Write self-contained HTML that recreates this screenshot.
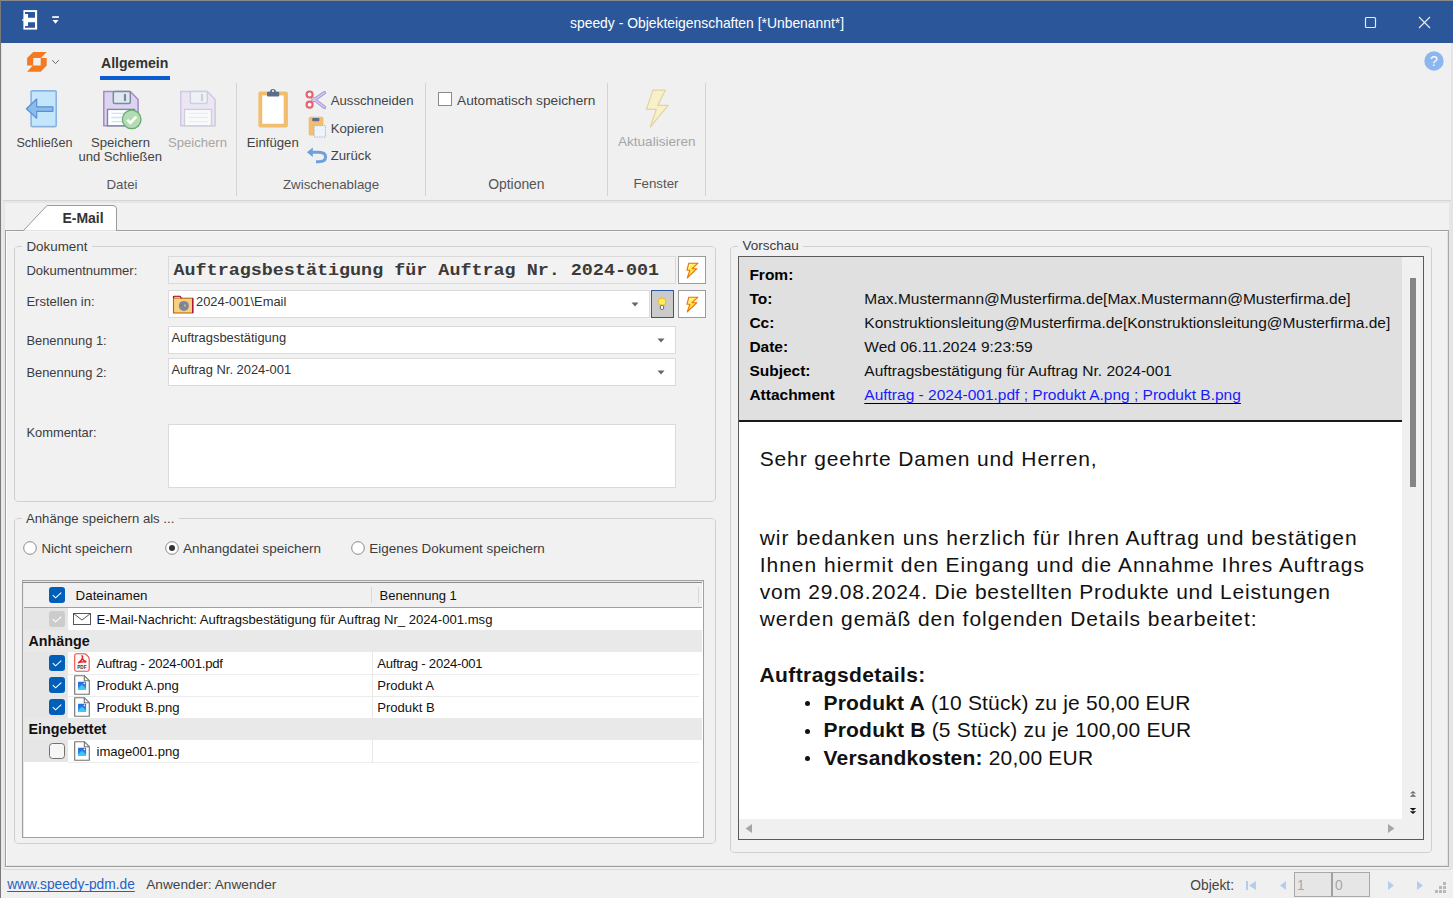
<!DOCTYPE html><html><head><meta charset="utf-8"><style>
html,body{margin:0;padding:0;}
body{width:1453px;height:898px;overflow:hidden;position:relative;background:#f0f0f0;font-family:"Liberation Sans",sans-serif;}
.t{position:absolute;white-space:pre;}
.r{position:absolute;box-sizing:border-box;}
</style></head><body>
<div class="r" style="left:0px;top:0px;width:1453px;height:1px;background:#8a8a8a"></div>
<div class="r" style="left:0px;top:0px;width:1px;height:898px;background:#7a7a7a"></div>
<div class="r" style="left:1px;top:1px;width:1452px;height:42px;background:#2b579a"></div>
<svg class="r" style="left:21px;top:9px;" width="18" height="23" viewBox="0 0 18 23"><rect x="2.4" y="1.1" width="13.7" height="19.5" fill="#fff"/><path d="M4 3.1 H14 V8.7 H7 V5 H4 Z M4 18.8 H14 V13.2 H7 V17 H4 Z" fill="#2b579a"/><path d="M2.6 9.6 L0.8 11 L2.6 12.4 Z" fill="#fff"/></svg>
<svg class="r" style="left:49px;top:15px;" width="12" height="10" viewBox="0 0 12 10"><rect x="3.2" y="1.2" width="6.7" height="1.7" fill="#fff"/><path d="M3.5 5 L9.5 5 L6.5 8.8 Z" fill="#fff"/></svg>
<div class="t" style="left:570px;top:14.18px;font-size:13.9px;line-height:18px;font-weight:400;color:#fff;font-family:'Liberation Sans', sans-serif;letter-spacing:0px;">speedy - Objekteigenschaften [*Unbenannt*]</div>
<svg class="r" style="left:1364px;top:16px;" width="13" height="13" viewBox="0 0 13 13"><rect x="1.5" y="1.5" width="10" height="10" rx="1" fill="none" stroke="#e8e8e8" stroke-width="1.2"/></svg>
<svg class="r" style="left:1418px;top:16px;" width="13" height="13" viewBox="0 0 13 13"><path d="M1 1 L12 12 M12 1 L1 12" stroke="#e8e8e8" stroke-width="1.2"/></svg>
<div class="r" style="left:1px;top:43px;width:1452px;height:157px;background:#f0f0f0"></div>
<div class="r" style="left:1px;top:43px;width:1px;height:826px;background:#e6e6e6"></div>
<div class="r" style="left:2px;top:43px;width:1px;height:826px;background:#ececec"></div>
<div class="r" style="left:1451px;top:43px;width:2px;height:826px;background:#e4e4e4"></div>
<div class="r" style="left:3px;top:200px;width:1448px;height:1px;background:#d6d6d6"></div>
<div class="r" style="left:3px;top:201px;width:1448px;height:1px;background:#e6e6e6"></div>
<svg class="r" style="left:26px;top:51px;" width="22" height="22" viewBox="0 0 22 22"><path d="M7.2 1 L20.7 1 L15 7.1 L20.7 7.1 L20.7 14.6 L14.7 20.8 L1.1 20.8 L6.8 14.6 L1.1 14.6 L1.1 7.1 Z M7.2 7.1 L7.2 14.6 L14.7 14.6 L14.7 7.1 Z" fill="#f57a1f" fill-rule="evenodd"/></svg>
<svg class="r" style="left:50px;top:58px;" width="10" height="7" viewBox="0 0 10 7"><path d="M2.2 2.2 L5.5 5.6 L8.8 2.2" fill="none" stroke="#666" stroke-width="1"/></svg>
<div class="t" style="left:101px;top:54.11px;font-size:14.1px;line-height:18px;font-weight:700;color:#333;font-family:'Liberation Sans', sans-serif;letter-spacing:0px;">Allgemein</div>
<div class="r" style="left:100px;top:76px;width:70px;height:4px;background:#0b5ccf"></div>
<svg class="r" style="left:1424px;top:51px;" width="20" height="20" viewBox="0 0 20 20"><circle cx="10" cy="10" r="9.7" fill="#8cb6ef"/><text x="10" y="15" font-family="Liberation Sans" font-weight="400" font-size="14" fill="#fff" text-anchor="middle">?</text></svg>
<div class="r" style="left:236px;top:83px;width:1px;height:113px;background:#d4d4d4"></div>
<div class="r" style="left:425px;top:83px;width:1px;height:113px;background:#d4d4d4"></div>
<div class="r" style="left:607px;top:83px;width:1px;height:113px;background:#d4d4d4"></div>
<div class="r" style="left:705px;top:83px;width:1px;height:113px;background:#d4d4d4"></div>
<svg class="r" style="left:24px;top:88px;" width="36" height="42" viewBox="0 0 36 42"><rect x="7.1" y="2.9" width="25.1" height="35.7" rx="1" fill="#c4e6fc" stroke="#8ab4de" stroke-width="1.6"/><path d="M2.4 20.8 L12.7 11 L12.7 18.8 L28.9 18.8 L28.9 23.3 L12.7 23.3 L12.7 30.2 Z" fill="#8cbcee" stroke="#5a90d0" stroke-width="1.2" stroke-linejoin="round"/></svg>
<div class="t" style="left:16.4px;top:134.63px;font-size:12.6px;line-height:16px;font-weight:400;color:#444;font-family:'Liberation Sans', sans-serif;letter-spacing:0px;">Schließen</div>
<svg class="r" style="left:100px;top:88px;" width="44" height="44" viewBox="0 0 44 44"><path d="M3.8 3.6 L30.3 3.6 L38.1 11.6 L38.1 37.8 L3.8 37.8 Z" fill="#dcd4f0" stroke="#a48cc4" stroke-width="1.5"/><rect x="13.3" y="3.6" width="17" height="11.9" rx="1.5" fill="#dde8f0" stroke="#7c8aa0" stroke-width="1.5"/><rect x="23.9" y="6" width="2.2" height="7" fill="#7c8aa0"/><rect x="7.5" y="21.4" width="27" height="16.4" fill="#fff" stroke="#7c8aa0" stroke-width="1.4"/><path d="M11.4 25.3 H31 M11.4 29.5 H31 M11.4 33.6 H31" stroke="#c8e4f8" stroke-width="1.3"/><circle cx="31.7" cy="31.4" r="9.3" fill="#b4dcb4" stroke="#6aaa70" stroke-width="1.3"/><path d="M27.3 31.8 L30.3 34.8 L36.4 28.6" fill="none" stroke="#fff" stroke-width="2.6"/></svg>
<div class="t" style="left:91px;top:133.96px;font-size:13.1px;line-height:17px;font-weight:400;color:#444;font-family:'Liberation Sans', sans-serif;letter-spacing:0px;">Speichern</div>
<div class="t" style="left:78.4px;top:147.96px;font-size:13.1px;line-height:17px;font-weight:400;color:#444;font-family:'Liberation Sans', sans-serif;letter-spacing:0px;">und Schließen</div>
<svg class="r" style="left:177px;top:88px;" width="44" height="44" viewBox="0 0 44 44"><path d="M3.8 3.6 L30.3 3.6 L38.1 11.6 L38.1 37.8 L3.8 37.8 Z" fill="#ece6f4" stroke="#d2c6e2" stroke-width="1.5"/><rect x="13.3" y="3.6" width="17" height="11.9" rx="1.5" fill="#eef2f6" stroke="#cbd0da" stroke-width="1.5"/><rect x="23.9" y="6" width="2.2" height="7" fill="#cbd0da"/><rect x="7.5" y="21.4" width="27" height="16.4" fill="#fafafa" stroke="#cbd0da" stroke-width="1.4"/><path d="M11.4 25.3 H31 M11.4 29.5 H31 M11.4 33.6 H31" stroke="#e2eef8" stroke-width="1.3"/></svg>
<div class="t" style="left:168px;top:133.96px;font-size:13.1px;line-height:17px;font-weight:400;color:#a6a6a6;font-family:'Liberation Sans', sans-serif;letter-spacing:0px;">Speichern</div>
<div class="t" style="left:106.5px;top:175.69px;font-size:13.3px;line-height:17px;font-weight:400;color:#555;font-family:'Liberation Sans', sans-serif;letter-spacing:0px;">Datei</div>
<svg class="r" style="left:256px;top:86px;" width="34" height="44" viewBox="0 0 34 44"><rect x="2.4" y="5.5" width="29.5" height="35.9" rx="2" fill="#f2bd6c"/><rect x="6.2" y="9.4" width="21.5" height="28.4" fill="#fff"/><rect x="11" y="5.8" width="12.2" height="4.7" rx="1" fill="#5a6e8c"/><path d="M14 6 Q14 3 17 3 Q20 3 20 6 Z" fill="#5a6e8c"/><circle cx="17" cy="5" r="1" fill="#fff"/></svg>
<div class="t" style="left:246.7px;top:133.73px;font-size:13.2px;line-height:17px;font-weight:400;color:#444;font-family:'Liberation Sans', sans-serif;letter-spacing:0px;">Einfügen</div>
<svg class="r" style="left:304px;top:89px;" width="24" height="22" viewBox="0 0 24 22"><path d="M8.5 12 L20.5 3.7 M8.5 9 L20.5 18.4" stroke="#a594d4" stroke-width="3.4" stroke-linecap="round"/><path d="M8.5 12 L20.5 3.7 M8.5 9 L20.5 18.4" stroke="#d4c6f0" stroke-width="1.6" stroke-linecap="round"/><circle cx="5.6" cy="5.5" r="3" fill="#fff" stroke="#e06670" stroke-width="2.2"/><circle cx="5.6" cy="15.7" r="3" fill="#fff" stroke="#e06670" stroke-width="2.2"/></svg>
<div class="t" style="left:330.7px;top:91.73px;font-size:13.2px;line-height:17px;font-weight:400;color:#444;font-family:'Liberation Sans', sans-serif;letter-spacing:0px;">Ausschneiden</div>
<svg class="r" style="left:306px;top:115px;" width="22" height="24" viewBox="0 0 22 24"><rect x="2.7" y="1.7" width="14.7" height="18.7" rx="1.5" fill="#f2bd6c"/><rect x="6.2" y="3" width="7.2" height="3.2" rx="1" fill="#5a6e8c"/><rect x="8.1" y="10.7" width="11.3" height="11.3" fill="#eef4fa" stroke="#a8b4c4" stroke-width="1" stroke-dasharray="1.5 1"/></svg>
<div class="t" style="left:330.7px;top:119.63px;font-size:13.2px;line-height:17px;font-weight:400;color:#444;font-family:'Liberation Sans', sans-serif;letter-spacing:0px;">Kopieren</div>
<svg class="r" style="left:305px;top:145px;" width="24" height="20" viewBox="0 0 24 20"><path d="M6 7.3 H13.5 Q20.6 7.3 20.6 12 Q20.6 16.7 13.5 16.7 H11" fill="none" stroke="#6ea0dc" stroke-width="3"/><path d="M1.9 7.3 L7.8 2.5 L7.8 12.1 Z" fill="#6ea0dc"/></svg>
<div class="t" style="left:330.7px;top:147.43px;font-size:13.2px;line-height:17px;font-weight:400;color:#444;font-family:'Liberation Sans', sans-serif;letter-spacing:0px;">Zurück</div>
<div class="t" style="left:283px;top:175.59px;font-size:13.3px;line-height:17px;font-weight:400;color:#555;font-family:'Liberation Sans', sans-serif;letter-spacing:0px;">Zwischenablage</div>
<div class="r" style="left:438px;top:92px;width:14px;height:14px;background:#fff;border:1px solid #8a8a8a"></div>
<div class="t" style="left:457px;top:91.55px;font-size:13.7px;line-height:18px;font-weight:400;color:#444;font-family:'Liberation Sans', sans-serif;letter-spacing:0px;">Automatisch speichern</div>
<div class="t" style="left:488.2px;top:174.58px;font-size:13.9px;line-height:18px;font-weight:400;color:#555;font-family:'Liberation Sans', sans-serif;letter-spacing:0px;">Optionen</div>
<svg class="r" style="left:643px;top:88px;" width="30" height="42" viewBox="0 0 30 42"><path d="M10 2.1 L22.4 2.1 L14.7 17.4 L25.1 17.4 L7.4 38.8 L13.3 21.4 L3.4 21.4 Z" fill="#f8f0c8" stroke="#e2d2a0" stroke-width="1.2" stroke-linejoin="round"/></svg>
<div class="t" style="left:618px;top:133.30px;font-size:13.55px;line-height:18px;font-weight:400;color:#a6a6a6;font-family:'Liberation Sans', sans-serif;letter-spacing:0px;">Aktualisieren</div>
<div class="t" style="left:633.4px;top:175.29px;font-size:13.3px;line-height:17px;font-weight:400;color:#555;font-family:'Liberation Sans', sans-serif;letter-spacing:0px;">Fenster</div>
<div class="r" style="left:3px;top:201px;width:1448px;height:2px;background:#e6e6e6"></div>
<div class="r" style="left:3px;top:203px;width:2px;height:666px;background:#e6e6e6"></div>
<div class="r" style="left:1449px;top:203px;width:2px;height:666px;background:#e6e6e6"></div>
<div class="r" style="left:5px;top:203px;width:1444px;height:666px;background:#f1f1f1"></div>
<div class="r" style="left:5px;top:230px;width:1444px;height:637px;border:1px solid #a0a0a0;border-right-color:#a8a8a8;"></div>
<div class="r" style="left:6px;top:231px;width:1442px;height:635px;border-left:1px solid #fbfbfb;border-top:1px solid #f8f8f8;border-right:1px solid #e3e3e3;border-bottom:1px solid #e3e3e3;"></div>
<div class="r" style="left:3px;top:869px;width:1448px;height:1px;background:#dcdcdc"></div>
<svg class="r" style="left:22px;top:204px;" width="96" height="28" viewBox="0 0 96 28"><path d="M1 27 L25 1.5 L91 1.5 Q94.5 1.5 94.5 5 L94.5 27" fill="#fff" stroke="#9a9a9a" stroke-width="1"/><rect x="2" y="26" width="92" height="1.2" fill="#e2e2e2"/><rect x="2" y="27" width="92" height="1" fill="#f6f6f6"/></svg>
<div class="t" style="left:62.4px;top:208.65px;font-size:14px;line-height:18px;font-weight:700;color:#333;font-family:'Liberation Sans', sans-serif;letter-spacing:0px;">E-Mail</div>
<svg class="r" style="left:14px;top:246px" width="703" height="257" viewBox="0 0 703 257"><path d="M8 0.5 L3.0 0.5 L0.5 3.0 L0.5 253.0 L3.0 255.5 L699.0 255.5 L701.5 253.0 L701.5 3.0 L699.0 0.5 L78 0.5" fill="none" stroke="#d0d0d0" stroke-width="1"/></svg>
<div class="t" style="left:26.4px;top:237.56px;font-size:13.4px;line-height:17px;font-weight:400;color:#3c3c3c;font-family:'Liberation Sans', sans-serif;letter-spacing:0px;">Dokument</div>
<div class="t" style="left:26.4px;top:261.58px;font-size:13.05px;line-height:17px;font-weight:400;color:#3c3c3c;font-family:'Liberation Sans', sans-serif;letter-spacing:0px;">Dokumentnummer:</div>
<div class="t" style="left:26.4px;top:293.48px;font-size:13.05px;line-height:17px;font-weight:400;color:#3c3c3c;font-family:'Liberation Sans', sans-serif;letter-spacing:0px;">Erstellen in:</div>
<div class="t" style="left:26.4px;top:332.03px;font-size:12.9px;line-height:17px;font-weight:400;color:#3c3c3c;font-family:'Liberation Sans', sans-serif;letter-spacing:0px;">Benennung 1:</div>
<div class="t" style="left:26.4px;top:364.03px;font-size:12.9px;line-height:17px;font-weight:400;color:#3c3c3c;font-family:'Liberation Sans', sans-serif;letter-spacing:0px;">Benennung 2:</div>
<div class="t" style="left:26.4px;top:423.73px;font-size:12.9px;line-height:17px;font-weight:400;color:#3c3c3c;font-family:'Liberation Sans', sans-serif;letter-spacing:0px;">Kommentar:</div>
<div class="r" style="left:168px;top:256px;width:508px;height:28px;background:#f2f2f2;border:1px solid #dadada"></div>
<div class="t" style="left:173.5px;top:258.62px;font-size:18.4px;line-height:24px;font-weight:700;color:#3a3a3a;font-family:'Liberation Mono', monospace;letter-spacing:0px;transform:scaleY(0.87);transform-origin:0 17.2px;">Auftragsbestätigung für Auftrag Nr. 2024-001</div>
<div class="r" style="left:678px;top:256px;width:28px;height:28px;background:#fff;border:1px solid #9c9c9c"></div>
<svg class="r" style="left:684px;top:260px;" width="20" height="22" viewBox="0 0 20 22"><defs><linearGradient id="bg" x1="0" y1="0" x2="1" y2="1"><stop offset="0" stop-color="#fffbd0"/><stop offset="0.5" stop-color="#ffe838"/><stop offset="1" stop-color="#ffc800"/></linearGradient></defs><path d="M4.8 3.2 L14 3.2 L8.1 8.7 L12.9 8.7 L3.3 17.9 L5.9 10.2 L3 10.2 Z" fill="url(#bg)" stroke="#e87400" stroke-width="1.15" stroke-linejoin="round"/></svg>
<div class="r" style="left:678px;top:290px;width:28px;height:28px;background:#fff;border:1px solid #9c9c9c"></div>
<svg class="r" style="left:684px;top:294px;" width="20" height="22" viewBox="0 0 20 22"><defs><linearGradient id="bg" x1="0" y1="0" x2="1" y2="1"><stop offset="0" stop-color="#fffbd0"/><stop offset="0.5" stop-color="#ffe838"/><stop offset="1" stop-color="#ffc800"/></linearGradient></defs><path d="M4.8 3.2 L14 3.2 L8.1 8.7 L12.9 8.7 L3.3 17.9 L5.9 10.2 L3 10.2 Z" fill="url(#bg)" stroke="#e87400" stroke-width="1.15" stroke-linejoin="round"/></svg>
<div class="r" style="left:651px;top:290px;width:23px;height:28px;background:#cbcbcb;border:1.3px solid #2a58a8"></div>
<svg class="r" style="left:655px;top:296px;" width="16" height="16" viewBox="0 0 16 16"><circle cx="7" cy="5.8" r="3.8" fill="#ffef60" stroke="#f0b020" stroke-width="0.9"/><rect x="5.4" y="9.3" width="3.2" height="4.2" rx="1.2" fill="#f4f4f4" stroke="#555" stroke-width="0.9"/></svg>
<div class="r" style="left:168px;top:290px;width:482px;height:28px;background:#fff;border:1px solid #dadada"></div>
<svg class="r" style="left:172px;top:295px;" width="22" height="20" viewBox="0 0 22 20"><rect x="1.5" y="3.2" width="19.3" height="14.8" fill="#f8d080" stroke="#b86a10" stroke-width="1.1"/><path d="M20.8 3.2 V18" stroke="#a00040" stroke-width="1.2"/><path d="M1.5 3.2 V1.8 Q1.5 1.2 2.2 1.2 L8 1.2 L9 2.4 L9 3.4" fill="#f0c070" stroke="#a00020" stroke-width="1.1"/><circle cx="11.9" cy="10.9" r="5" fill="#85859a"/><circle cx="9.5" cy="10" r="1" fill="#20a0a0"/><circle cx="13" cy="10.5" r="0.9" fill="#e0d060"/></svg>
<div class="t" style="left:196px;top:293.23px;font-size:12.9px;line-height:17px;font-weight:400;color:#333;font-family:'Liberation Sans', sans-serif;letter-spacing:0px;">2024-001\Email</div>
<svg class="r" style="left:631px;top:302px;" width="8" height="5" viewBox="0 0 8 5"><path d="M0.5 0.5 L7.5 0.5 L4 4.5 Z" fill="#666"/></svg>
<div class="r" style="left:168px;top:326px;width:508px;height:28px;background:#fff;border:1px solid #dadada"></div>
<div class="t" style="left:171.4px;top:328.63px;font-size:12.9px;line-height:17px;font-weight:400;color:#333;font-family:'Liberation Sans', sans-serif;letter-spacing:0px;">Auftragsbestätigung</div>
<svg class="r" style="left:657px;top:338px;" width="8" height="5" viewBox="0 0 8 5"><path d="M0.5 0.5 L7.5 0.5 L4 4.5 Z" fill="#666"/></svg>
<div class="r" style="left:168px;top:358px;width:508px;height:28px;background:#fff;border:1px solid #dadada"></div>
<div class="t" style="left:171.4px;top:360.63px;font-size:12.9px;line-height:17px;font-weight:400;color:#333;font-family:'Liberation Sans', sans-serif;letter-spacing:0px;">Auftrag Nr. 2024-001</div>
<svg class="r" style="left:657px;top:370px;" width="8" height="5" viewBox="0 0 8 5"><path d="M0.5 0.5 L7.5 0.5 L4 4.5 Z" fill="#666"/></svg>
<div class="r" style="left:168px;top:424px;width:508px;height:64px;background:#fff;border:1px solid #dadada"></div>
<svg class="r" style="left:14px;top:518px" width="703" height="327" viewBox="0 0 703 327"><path d="M8 0.5 L3.0 0.5 L0.5 3.0 L0.5 323.0 L3.0 325.5 L699.0 325.5 L701.5 323.0 L701.5 3.0 L699.0 0.5 L165 0.5" fill="none" stroke="#d0d0d0" stroke-width="1"/></svg>
<div class="t" style="left:26px;top:510.24px;font-size:13.15px;line-height:17px;font-weight:400;color:#3c3c3c;font-family:'Liberation Sans', sans-serif;letter-spacing:0px;">Anhänge speichern als ...</div>
<svg class="r" style="left:23px;top:541px;" width="14" height="14" viewBox="0 0 14 14"><circle cx="7" cy="7" r="6.3" fill="#fff" stroke="#8a8a8a" stroke-width="1"/></svg>
<div class="t" style="left:41.4px;top:539.63px;font-size:13.2px;line-height:17px;font-weight:400;color:#3c3c3c;font-family:'Liberation Sans', sans-serif;letter-spacing:0px;">Nicht speichern</div>
<svg class="r" style="left:165px;top:541px;" width="14" height="14" viewBox="0 0 14 14"><circle cx="7" cy="7" r="6.3" fill="#fff" stroke="#8a8a8a" stroke-width="1"/><circle cx="7" cy="7" r="3" fill="#333"/></svg>
<div class="t" style="left:183px;top:539.52px;font-size:13.5px;line-height:18px;font-weight:400;color:#3c3c3c;font-family:'Liberation Sans', sans-serif;letter-spacing:0px;">Anhangdatei speichern</div>
<svg class="r" style="left:351px;top:541px;" width="14" height="14" viewBox="0 0 14 14"><circle cx="7" cy="7" r="6.3" fill="#fff" stroke="#8a8a8a" stroke-width="1"/></svg>
<div class="t" style="left:369.3px;top:539.84px;font-size:13.45px;line-height:17px;font-weight:400;color:#3c3c3c;font-family:'Liberation Sans', sans-serif;letter-spacing:0px;">Eigenes Dokument speichern</div>
<div class="r" style="left:22px;top:580px;width:682px;height:258px;background:#fff;border:1px solid #a0a0a0"></div>
<div class="r" style="left:23px;top:581px;width:680px;height:256px;border-top:1px solid #e8e8e8;border-left:1px solid #e8e8e8;"></div>
<div class="r" style="left:23px;top:582px;width:679px;height:1px;background:#8c8c8c"></div>
<div class="r" style="left:24px;top:583px;width:678px;height:24px;background:#f0f0f0"></div>
<div class="r" style="left:24px;top:607px;width:678px;height:1px;background:#a0a0a0"></div>
<div class="r" style="left:371px;top:587px;width:1px;height:16px;background:#d8d8d8"></div>
<div class="r" style="left:698px;top:587px;width:1px;height:16px;background:#d8d8d8"></div>
<svg class="r" style="left:49px;top:587px;" width="16" height="16" viewBox="0 0 16 16"><rect x="0" y="0" width="16" height="16" rx="3" fill="#005fb8"/><path d="M3.8 8.2 L6.6 10.8 L12.3 5.6" fill="none" stroke="#fff" stroke-width="1.1"/></svg>
<div class="t" style="left:75.6px;top:586.87px;font-size:13.35px;line-height:17px;font-weight:400;color:#111;font-family:'Liberation Sans', sans-serif;letter-spacing:0px;">Dateinamen</div>
<div class="t" style="left:379.5px;top:586.80px;font-size:13.0px;line-height:17px;font-weight:400;color:#111;font-family:'Liberation Sans', sans-serif;letter-spacing:0px;">Benennung 1</div>
<div class="r" style="left:24px;top:608px;width:44px;height:22px;background:#e6e6e6"></div>
<div class="r" style="left:68px;top:630px;width:631px;height:1px;background:#ececec"></div>
<svg class="r" style="left:49px;top:611px;" width="16" height="16" viewBox="0 0 16 16"><rect x="0" y="0" width="16" height="16" rx="3" fill="#cccccc"/><path d="M3.8 8.2 L6.6 10.8 L12.3 5.6" fill="none" stroke="#fff" stroke-width="1.1"/></svg>
<svg class="r" style="left:73px;top:613px;" width="18" height="12" viewBox="0 0 18 12"><rect x="0.5" y="0.5" width="17" height="11" fill="#fff" stroke="#555" stroke-width="1"/><path d="M0.5 0.5 L9 7 L17.5 0.5" fill="none" stroke="#555" stroke-width="1"/></svg>
<div class="t" style="left:96.5px;top:611.46px;font-size:13.1px;line-height:17px;font-weight:400;color:#111;font-family:'Liberation Sans', sans-serif;letter-spacing:0px;">E-Mail-Nachricht: Auftragsbestätigung für Auftrag Nr_ 2024-001.msg</div>
<div class="r" style="left:24px;top:630px;width:678px;height:22px;background:#e9e9e9"></div>
<div class="t" style="left:28.5px;top:632.05px;font-size:14.3px;line-height:19px;font-weight:700;color:#111;font-family:'Liberation Sans', sans-serif;letter-spacing:0px;">Anhänge</div>
<div class="r" style="left:24px;top:652px;width:44px;height:22px;background:#e6e6e6"></div>
<div class="r" style="left:68px;top:674px;width:631px;height:1px;background:#ececec"></div>
<div class="r" style="left:372px;top:652px;width:1px;height:22px;background:#e8e8e8"></div>
<svg class="r" style="left:49px;top:655px;" width="16" height="16" viewBox="0 0 16 16"><rect x="0" y="0" width="16" height="16" rx="3" fill="#005fb8"/><path d="M3.8 8.2 L6.6 10.8 L12.3 5.6" fill="none" stroke="#fff" stroke-width="1.1"/></svg>
<svg class="r" style="left:74px;top:653px;" width="16" height="20" viewBox="0 0 16 20"><path d="M0.7 2.6 Q0.7 0.7 2.6 0.7 L11 0.7 Q15.2 3.5 15.2 6 L15.2 16.4 Q15.2 18.3 13.3 18.3 L2.6 18.3 Q0.7 18.3 0.7 16.4 Z" fill="#fafafa" stroke="#f04848" stroke-width="1.1"/><path d="M7.4 2.8 Q9 2.8 8.4 5.2 Q7.6 7.6 4.2 10.2 M8.3 5.6 Q9.6 8 12.4 8.7 M4.4 9.6 Q8 8.3 12.2 8.9" stroke="#e82020" stroke-width="1.5" fill="none"/><text x="7.9" y="15.6" font-size="4.6" font-family="Liberation Sans" font-weight="700" text-anchor="middle" fill="#333">PDF</text></svg>
<div class="t" style="left:96.5px;top:655.46px;font-size:13.1px;line-height:17px;font-weight:400;color:#111;font-family:'Liberation Sans', sans-serif;letter-spacing:-0.22px;">Auftrag - 2024-001.pdf</div>
<div class="t" style="left:377.2px;top:655.46px;font-size:13.1px;line-height:17px;font-weight:400;color:#111;font-family:'Liberation Sans', sans-serif;letter-spacing:-0.22px;">Auftrag - 2024-001</div>
<div class="r" style="left:24px;top:674px;width:44px;height:22px;background:#e6e6e6"></div>
<div class="r" style="left:68px;top:696px;width:631px;height:1px;background:#ececec"></div>
<div class="r" style="left:372px;top:674px;width:1px;height:22px;background:#e8e8e8"></div>
<svg class="r" style="left:49px;top:677px;" width="16" height="16" viewBox="0 0 16 16"><rect x="0" y="0" width="16" height="16" rx="3" fill="#005fb8"/><path d="M3.8 8.2 L6.6 10.8 L12.3 5.6" fill="none" stroke="#fff" stroke-width="1.1"/></svg>
<svg class="r" style="left:74px;top:675px;" width="16" height="20" viewBox="0 0 16 20"><defs><linearGradient id="pg" x1="0" y1="0" x2="0" y2="1"><stop offset="0" stop-color="#2a66d6"/><stop offset="1" stop-color="#2a9af0"/></linearGradient></defs><path d="M0.7 0.7 L10.3 0.7 L15.3 5.7 L15.3 19.3 L0.7 19.3 Z" fill="#fff" stroke="#707070" stroke-width="1.1" stroke-linejoin="round"/><path d="M10.3 0.7 V5.7 H15.3" fill="none" stroke="#707070" stroke-width="1.1"/><rect x="4" y="6.8" width="8.1" height="8.3" rx="0.8" fill="url(#pg)"/><path d="M4 15.1 L4 13.6 L8 9.8 L12.1 13.8 L12.1 15.1 Z" fill="#3cc8ff"/><circle cx="10.4" cy="8.4" r="0.8" fill="#fff"/></svg>
<div class="t" style="left:96.5px;top:677.46px;font-size:13.1px;line-height:17px;font-weight:400;color:#111;font-family:'Liberation Sans', sans-serif;letter-spacing:0px;">Produkt A.png</div>
<div class="t" style="left:377.2px;top:677.46px;font-size:13.1px;line-height:17px;font-weight:400;color:#111;font-family:'Liberation Sans', sans-serif;letter-spacing:0px;">Produkt A</div>
<div class="r" style="left:24px;top:696px;width:44px;height:22px;background:#e6e6e6"></div>
<div class="r" style="left:68px;top:718px;width:631px;height:1px;background:#ececec"></div>
<div class="r" style="left:372px;top:696px;width:1px;height:22px;background:#e8e8e8"></div>
<svg class="r" style="left:49px;top:699px;" width="16" height="16" viewBox="0 0 16 16"><rect x="0" y="0" width="16" height="16" rx="3" fill="#005fb8"/><path d="M3.8 8.2 L6.6 10.8 L12.3 5.6" fill="none" stroke="#fff" stroke-width="1.1"/></svg>
<svg class="r" style="left:74px;top:697px;" width="16" height="20" viewBox="0 0 16 20"><defs><linearGradient id="pg" x1="0" y1="0" x2="0" y2="1"><stop offset="0" stop-color="#2a66d6"/><stop offset="1" stop-color="#2a9af0"/></linearGradient></defs><path d="M0.7 0.7 L10.3 0.7 L15.3 5.7 L15.3 19.3 L0.7 19.3 Z" fill="#fff" stroke="#707070" stroke-width="1.1" stroke-linejoin="round"/><path d="M10.3 0.7 V5.7 H15.3" fill="none" stroke="#707070" stroke-width="1.1"/><rect x="4" y="6.8" width="8.1" height="8.3" rx="0.8" fill="url(#pg)"/><path d="M4 15.1 L4 13.6 L8 9.8 L12.1 13.8 L12.1 15.1 Z" fill="#3cc8ff"/><circle cx="10.4" cy="8.4" r="0.8" fill="#fff"/></svg>
<div class="t" style="left:96.5px;top:699.46px;font-size:13.1px;line-height:17px;font-weight:400;color:#111;font-family:'Liberation Sans', sans-serif;letter-spacing:0px;">Produkt B.png</div>
<div class="t" style="left:377.2px;top:699.46px;font-size:13.1px;line-height:17px;font-weight:400;color:#111;font-family:'Liberation Sans', sans-serif;letter-spacing:0px;">Produkt B</div>
<div class="r" style="left:24px;top:718px;width:678px;height:22px;background:#e9e9e9"></div>
<div class="t" style="left:28.5px;top:720.05px;font-size:14.3px;line-height:19px;font-weight:700;color:#111;font-family:'Liberation Sans', sans-serif;letter-spacing:0px;">Eingebettet</div>
<div class="r" style="left:24px;top:740px;width:44px;height:22px;background:#e6e6e6"></div>
<div class="r" style="left:68px;top:762px;width:631px;height:1px;background:#ececec"></div>
<div class="r" style="left:372px;top:740px;width:1px;height:22px;background:#e8e8e8"></div>
<svg class="r" style="left:49px;top:743px;" width="16" height="16" viewBox="0 0 16 16"><rect x="0.5" y="0.5" width="15" height="15" rx="3" fill="#f6f6f6" stroke="#707070" stroke-width="1"/></svg>
<svg class="r" style="left:74px;top:741px;" width="16" height="20" viewBox="0 0 16 20"><defs><linearGradient id="pg" x1="0" y1="0" x2="0" y2="1"><stop offset="0" stop-color="#2a66d6"/><stop offset="1" stop-color="#2a9af0"/></linearGradient></defs><path d="M0.7 0.7 L10.3 0.7 L15.3 5.7 L15.3 19.3 L0.7 19.3 Z" fill="#fff" stroke="#707070" stroke-width="1.1" stroke-linejoin="round"/><path d="M10.3 0.7 V5.7 H15.3" fill="none" stroke="#707070" stroke-width="1.1"/><rect x="4" y="6.8" width="8.1" height="8.3" rx="0.8" fill="url(#pg)"/><path d="M4 15.1 L4 13.6 L8 9.8 L12.1 13.8 L12.1 15.1 Z" fill="#3cc8ff"/><circle cx="10.4" cy="8.4" r="0.8" fill="#fff"/></svg>
<div class="t" style="left:96.5px;top:743.46px;font-size:13.1px;line-height:17px;font-weight:400;color:#111;font-family:'Liberation Sans', sans-serif;letter-spacing:0px;">image001.png</div>
<svg class="r" style="left:730px;top:246px" width="703" height="608" viewBox="0 0 703 608"><path d="M8 0.5 L3.0 0.5 L0.5 3.0 L0.5 604.0 L3.0 606.5 L699.0 606.5 L701.5 604.0 L701.5 3.0 L699.0 0.5 L73 0.5" fill="none" stroke="#d0d0d0" stroke-width="1"/></svg>
<div class="t" style="left:742.4px;top:236.72px;font-size:13.5px;line-height:18px;font-weight:400;color:#3c3c3c;font-family:'Liberation Sans', sans-serif;letter-spacing:0px;">Vorschau</div>
<div class="r" style="left:738px;top:256px;width:686px;height:584px;background:#fff;border:1px solid #5a5a5a"></div>
<div class="r" style="left:739px;top:257px;width:663px;height:163px;background:#e0e0e0"></div>
<div class="r" style="left:739px;top:420px;width:663px;height:2px;background:#1a1a1a"></div>
<div class="r" style="left:1402px;top:257px;width:21px;height:562px;background:#f0f0f0"></div>
<div class="r" style="left:1410px;top:278px;width:6px;height:209px;background:#858585"></div>
<svg class="r" style="left:1409px;top:790px;" width="8" height="8" viewBox="0 0 8 8"><path d="M1 3.6 L4 1 L7 3.6 Z M0.8 6.8 L4 4 L7.2 6.8 Z" fill="#6a6a6a"/></svg>
<svg class="r" style="left:1409px;top:807px;" width="8" height="8" viewBox="0 0 8 8"><path d="M0.8 1 L4 3.8 L7.2 1 Z M0.8 4.2 L4 7 L7.2 4.2 Z" fill="#111"/></svg>
<div class="r" style="left:739px;top:819px;width:663px;height:20px;background:#f0f0f0"></div>
<div class="r" style="left:1402px;top:819px;width:21px;height:20px;background:#f0f0f0"></div>
<svg class="r" style="left:744px;top:823px;" width="9" height="11" viewBox="0 0 9 11"><path d="M8 1 L8 10 L1.5 5.5 Z" fill="#a6a6a6"/></svg>
<svg class="r" style="left:1387px;top:823px;" width="9" height="11" viewBox="0 0 9 11"><path d="M1 1 L1 10 L7.5 5.5 Z" fill="#a6a6a6"/></svg>
<div class="t" style="left:749.4px;top:265.13px;font-size:15.5px;line-height:20px;font-weight:700;color:#000;font-family:'Liberation Sans', sans-serif;letter-spacing:0px;">From:</div>
<div class="t" style="left:749.4px;top:289.13px;font-size:15.5px;line-height:20px;font-weight:700;color:#000;font-family:'Liberation Sans', sans-serif;letter-spacing:0px;">To:</div>
<div class="t" style="left:864.3px;top:289.13px;font-size:15.5px;line-height:20px;font-weight:400;color:#111;font-family:'Liberation Sans', sans-serif;letter-spacing:0px;">Max.Mustermann@Musterfirma.de[Max.Mustermann@Musterfirma.de]</div>
<div class="t" style="left:749.4px;top:313.13px;font-size:15.5px;line-height:20px;font-weight:700;color:#000;font-family:'Liberation Sans', sans-serif;letter-spacing:0px;">Cc:</div>
<div class="t" style="left:864.3px;top:313.13px;font-size:15.5px;line-height:20px;font-weight:400;color:#111;font-family:'Liberation Sans', sans-serif;letter-spacing:0px;">Konstruktionsleitung@Musterfirma.de[Konstruktionsleitung@Musterfirma.de]</div>
<div class="t" style="left:749.4px;top:337.13px;font-size:15.5px;line-height:20px;font-weight:700;color:#000;font-family:'Liberation Sans', sans-serif;letter-spacing:0px;">Date:</div>
<div class="t" style="left:864.3px;top:337.13px;font-size:15.5px;line-height:20px;font-weight:400;color:#111;font-family:'Liberation Sans', sans-serif;letter-spacing:0px;">Wed 06.11.2024 9:23:59</div>
<div class="t" style="left:749.4px;top:361.13px;font-size:15.5px;line-height:20px;font-weight:700;color:#000;font-family:'Liberation Sans', sans-serif;letter-spacing:0px;">Subject:</div>
<div class="t" style="left:864.3px;top:361.13px;font-size:15.5px;line-height:20px;font-weight:400;color:#111;font-family:'Liberation Sans', sans-serif;letter-spacing:0px;">Auftragsbestätigung für Auftrag Nr. 2024-001</div>
<div class="t" style="left:749.4px;top:385.03px;font-size:15.5px;line-height:20px;font-weight:700;color:#000;font-family:'Liberation Sans', sans-serif;letter-spacing:0px;">Attachment</div>
<div class="t" style="left:864.3px;top:385.03px;font-size:15.5px;line-height:20px;font-weight:400;color:#1a1aff;font-family:'Liberation Sans', sans-serif;letter-spacing:0px;text-decoration:underline;text-decoration-color:#000;text-underline-offset:2.5px;text-decoration-skip-ink:none;">Auftrag - 2024-001.pdf ; Produkt A.png ; Produkt B.png</div>
<div class="t" style="left:759.7px;top:444.92px;font-size:21px;line-height:27px;font-weight:400;color:#111;font-family:'Liberation Sans', sans-serif;letter-spacing:0.87px;">Sehr geehrte Damen und Herren,</div>
<div class="t" style="left:759.7px;top:523.62px;font-size:21px;line-height:27px;font-weight:400;color:#111;font-family:'Liberation Sans', sans-serif;letter-spacing:0.95px;">wir bedanken uns herzlich für Ihren Auftrag und bestätigen</div>
<div class="t" style="left:759.7px;top:550.82px;font-size:21px;line-height:27px;font-weight:400;color:#111;font-family:'Liberation Sans', sans-serif;letter-spacing:0.99px;">Ihnen hiermit den Eingang und die Annahme Ihres Auftrags</div>
<div class="t" style="left:759.7px;top:578.02px;font-size:21px;line-height:27px;font-weight:400;color:#111;font-family:'Liberation Sans', sans-serif;letter-spacing:0.78px;">vom 29.08.2024. Die bestellten Produkte und Leistungen</div>
<div class="t" style="left:759.7px;top:605.22px;font-size:21px;line-height:27px;font-weight:400;color:#111;font-family:'Liberation Sans', sans-serif;letter-spacing:0.95px;">werden gemäß den folgenden Details bearbeitet:</div>
<div class="t" style="left:759.5px;top:660.72px;font-size:21px;line-height:27px;font-weight:700;color:#111;font-family:'Liberation Sans', sans-serif;letter-spacing:0.4px;">Auftragsdetails:</div>
<div class="r" style="left:805px;top:701.4px;width:5px;height:5px;background:#111;border-radius:50%"></div>
<div class="t" style="left:823.5px;top:689.12px;font-size:21px;line-height:27px;font-weight:400;color:#111;font-family:'Liberation Sans', sans-serif;letter-spacing:0.2px;"><b>Produkt A</b> (10 Stück) zu je 50,00 EUR</div>
<div class="r" style="left:805px;top:728.6999999999999px;width:5px;height:5px;background:#111;border-radius:50%"></div>
<div class="t" style="left:823.5px;top:716.42px;font-size:21px;line-height:27px;font-weight:400;color:#111;font-family:'Liberation Sans', sans-serif;letter-spacing:0.2px;"><b>Produkt B</b> (5 Stück) zu je 100,00 EUR</div>
<div class="r" style="left:805px;top:756.0px;width:5px;height:5px;background:#111;border-radius:50%"></div>
<div class="t" style="left:823.5px;top:743.72px;font-size:21px;line-height:27px;font-weight:400;color:#111;font-family:'Liberation Sans', sans-serif;letter-spacing:0.2px;"><b>Versandkosten:</b> 20,00 EUR</div>
<div class="t" style="left:7.2px;top:876.14px;font-size:13.75px;line-height:18px;font-weight:400;color:#1f63c6;font-family:'Liberation Sans', sans-serif;letter-spacing:0px;text-decoration:underline;text-decoration-skip-ink:none;text-underline-offset:2px;">www.speedy-pdm.de</div>
<div class="t" style="left:146.2px;top:875.75px;font-size:13.7px;line-height:18px;font-weight:400;color:#444;font-family:'Liberation Sans', sans-serif;letter-spacing:0px;">Anwender: Anwender</div>
<div class="t" style="left:1190.3px;top:877.22px;font-size:13.8px;line-height:18px;font-weight:400;color:#444;font-family:'Liberation Sans', sans-serif;letter-spacing:0px;">Objekt:</div>
<svg class="r" style="left:1245px;top:880px;" width="12" height="11" viewBox="0 0 12 11"><rect x="1" y="1" width="2" height="9" fill="#b4cdef"/><path d="M11 1 L11 10 L4 5.5 Z" fill="#b4cdef"/></svg>
<svg class="r" style="left:1279px;top:880px;" width="8" height="11" viewBox="0 0 8 11"><path d="M7 1 L7 10 L1 5.5 Z" fill="#b4cdef"/></svg>
<div class="r" style="left:1294px;top:872px;width:38px;height:25px;background:#e6e6e6;border:1px solid #a8a8a8"></div>
<div class="r" style="left:1331px;top:872px;width:39px;height:25px;background:#e6e6e6;border:1px solid #a8a8a8;border-left:2px solid #a0a0a0"></div>
<div class="t" style="left:1297px;top:877.22px;font-size:13.8px;line-height:18px;font-weight:400;color:#a8a8a8;font-family:'Liberation Sans', sans-serif;letter-spacing:0px;">1</div>
<div class="t" style="left:1335px;top:877.22px;font-size:13.8px;line-height:18px;font-weight:400;color:#a8a8a8;font-family:'Liberation Sans', sans-serif;letter-spacing:0px;">0</div>
<svg class="r" style="left:1387px;top:880px;" width="8" height="11" viewBox="0 0 8 11"><path d="M1 1 L1 10 L7 5.5 Z" fill="#b4cdef"/></svg>
<svg class="r" style="left:1416px;top:880px;" width="8" height="11" viewBox="0 0 8 11"><path d="M1 1 L1 10 L7 5.5 Z" fill="#b4cdef"/></svg>
<svg class="r" style="left:1434px;top:882px;" width="13" height="12" viewBox="0 0 13 12"><g fill="#b8b8b8"><rect x="9" y="0" width="3" height="3"/><rect x="5" y="4" width="3" height="3"/><rect x="9" y="4" width="3" height="3"/><rect x="1" y="8" width="3" height="3"/><rect x="5" y="8" width="3" height="3"/><rect x="9" y="8" width="3" height="3"/></g></svg>
</body></html>
